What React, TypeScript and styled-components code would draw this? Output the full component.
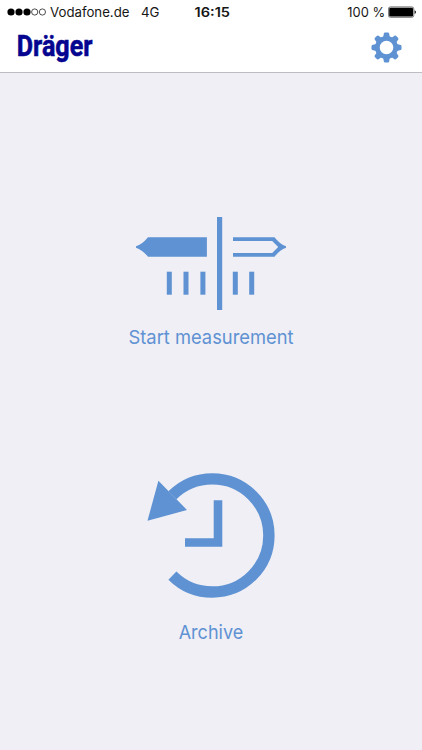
import React from "react";
import styled, { createGlobalStyle } from "styled-components";

const BLUE = "#5f92d3";

const GlobalStyle = createGlobalStyle`
  * { box-sizing: border-box; }
  body { margin: 0; background: #efeff5; }
`;

const Screen = styled.div`
  display: flex;
  flex-direction: column;
  width: 422px;
  height: 750px;
  overflow: hidden;
  background: #efeff5;
  font-family: Inter, "Liberation Sans", sans-serif;
`;

const Top = styled.header`
  height: 73px;
  flex: none;
  background: #fff;
  border-bottom: 1px solid #bebec2;
`;

const StatusBar = styled.div`
  display: grid;
  grid-template-columns: 1fr auto 1fr;
  align-items: center;
  height: 24px;
  padding: 0 5px 0 7px;
  color: #161616;
  font-size: 13px;
  line-height: 24px;
  white-space: nowrap;
`;

const Carrier = styled.div`
  display: flex;
  align-items: center;
`;

const Signal = styled.svg`
  display: block;
  width: 40px;
  height: 10px;
  margin-right: 3px;
`;

const Label = styled.svg<{ $gap?: number; $bold?: boolean }>`
  display: block;
  flex: none;
  height: 24px;
  margin-right: ${(p) => p.$gap ?? 0}px;
  font-size: 13px;
  font-weight: ${(p) => (p.$bold ? 600 : 400)};
  fill: #161616;
`;

const Power = styled.div`
  display: flex;
  align-items: center;
  justify-content: flex-end;
`;

const NavBar = styled.div`
  display: flex;
  justify-content: space-between;
  height: 48px;
  padding: 5px 20px 0 16px;
`;

const Logo = styled.svg`
  display: block;
  width: 80px;
  height: 38px;
  overflow: visible;
  font-family: Roboto, sans-serif;
  font-size: 30px;
  font-weight: 700;
  fill: #05058f;
  stroke: #05058f;
  stroke-width: 0.6;
`;

const IconButton = styled.button`
  display: block;
  width: 31px;
  height: 31px;
  margin-top: 3px;
  padding: 0;
  border: 0;
  background: none;
`;

const Menu = styled.main`
  display: flex;
  flex-direction: column;
  align-items: center;
`;

const Action = styled.button<{ $top: number; $gap: number }>`
  display: flex;
  flex-direction: column;
  align-items: center;
  gap: ${(p) => p.$gap}px;
  margin: ${(p) => p.$top}px 0 0;
  padding: 0;
  border: 0;
  background: none;
`;

const Art = styled.svg`
  display: block;
  fill: ${BLUE};
`;

const Caption = styled.svg`
  display: block;
  width: 180px;
  height: 28px;
  font-family: Inter, sans-serif;
  font-size: 19px;
  fill: ${BLUE};
`;

function gearPath() {
  const p = (r: number, deg: number) => {
    const a = (deg * Math.PI) / 180;
    return `${(15.5 + r * Math.cos(a)).toFixed(2)} ${(15.5 + r * Math.sin(a)).toFixed(2)}`;
  };
  const points: string[] = [];
  for (let i = 0; i < 8; i++) {
    const a = i * 45;
    points.push(p(11.8, a - 15.5), p(14.6, a - 10), p(15.1, a - 6), p(15.1, a + 6), p(14.6, a + 10), p(11.8, a + 15.5), p(11.3, a + 22.5));
  }
  return `M${points.join("L")}Z M22.3 15.5A6.8 6.8 0 1 0 8.7 15.5A6.8 6.8 0 1 0 22.3 15.5Z`;
}

export default function App() {
  return (
    <>
      <GlobalStyle />
      <Screen>
        <Top>
          <StatusBar>
            <Carrier>
              <Signal viewBox="0 0 40 10">
                {[4, 12, 20].map((x) => (
                  <circle key={x} cx={x} cy="5" r="3.6" fill="#000" />
                ))}
                {[27.7, 35.4].map((x) => (
                  <circle key={x} cx={x} cy="5" r="3.1" fill="none" stroke="#222" strokeWidth="0.8" />
                ))}
              </Signal>
              <Label width="80" $gap={11}>
                <text x="0" y="16.6" textLength="79.5" lengthAdjust="spacingAndGlyphs">Vodafone.de</text>
              </Label>
              <Label width="20">
                <text x="0" y="16.6" textLength="18.5" lengthAdjust="spacingAndGlyphs">4G</text>
              </Label>
            </Carrier>
            <Label width="36" $bold>
              <text x="0.5" y="16.6" textLength="35.5" lengthAdjust="spacingAndGlyphs">16:15</text>
            </Label>
            <Power>
              <Label width="39" $gap={2}>
                <text x="0.3" y="16.6" textLength="37.8" lengthAdjust="spacingAndGlyphs">100 %</text>
              </Label>
              <svg width="29" height="12" viewBox="0 0 29 12">
                <rect x="0.4" y="0.9" width="25.4" height="10.4" rx="2" fill="#fff" stroke="#555" strokeWidth="0.8" />
                <rect x="1.2" y="1.7" width="23.8" height="8.8" rx="1.2" fill="#000" />
                <path d="M26.6 4.2Q28 4.7 28 6.1T26.6 8Z" fill="#111" />
              </svg>
            </Power>
          </StatusBar>
          <NavBar>
            <Logo viewBox="0 0 80 38">
              <text x="0.8" y="26.6" textLength="75.6" lengthAdjust="spacingAndGlyphs">Dräger</text>
            </Logo>
            <IconButton aria-label="Settings">
              <Art width="31" height="31" viewBox="0 0 31 31">
                <path d={gearPath()} fillRule="evenodd" />
              </Art>
            </IconButton>
          </NavBar>
        </Top>
        <Menu>
          <Action $top={143} $gap={12}>
            <Art width="152" height="96" viewBox="135 216 152 96">
              <path d="M136 246.3Q142 244.5 148 237.2H206.9V256.7H148Q142 249.5 136 247.7Z" />
              <rect x="217" y="217" width="5.2" height="93" />
              <path d="M233 237.2H274.5Q280 244.3 286 246.3V247.7Q280 249.7 274.5 256.7H233V252.9H272.2L278.2 247L272.2 241H233Z" />
              {[166.8, 183.5, 200.4, 232.8, 249.2].map((x) => (
                <rect key={x} x={x} y="271.7" width="5" height="23" />
              ))}
            </Art>
            <Caption viewBox="121 324 180 28">
              <text x="128.5" y="344.4" textLength="165" lengthAdjust="spacingAndGlyphs">Start measurement</text>
            </Caption>
          </Action>
          <Action $top={120} $gap={18}>
            <Art width="130" height="128" viewBox="146 472 130 128">
              <path d="M172.4 495.3A56.6 56.6 0 1 1 172.4 575.6" fill="none" stroke={BLUE} strokeWidth="11.4" />
              <path d="M147.5 520.7L158.4 480.7L187 510Z" />
              <path d="M213.7 500.3H222.3V546.7H185V538.2H213.7Z" />
            </Art>
            <Caption viewBox="121 618 180 28">
              <text x="178.7" y="638.5" textLength="64.5" lengthAdjust="spacingAndGlyphs">Archive</text>
            </Caption>
          </Action>
        </Menu>
      </Screen>
    </>
  );
}
